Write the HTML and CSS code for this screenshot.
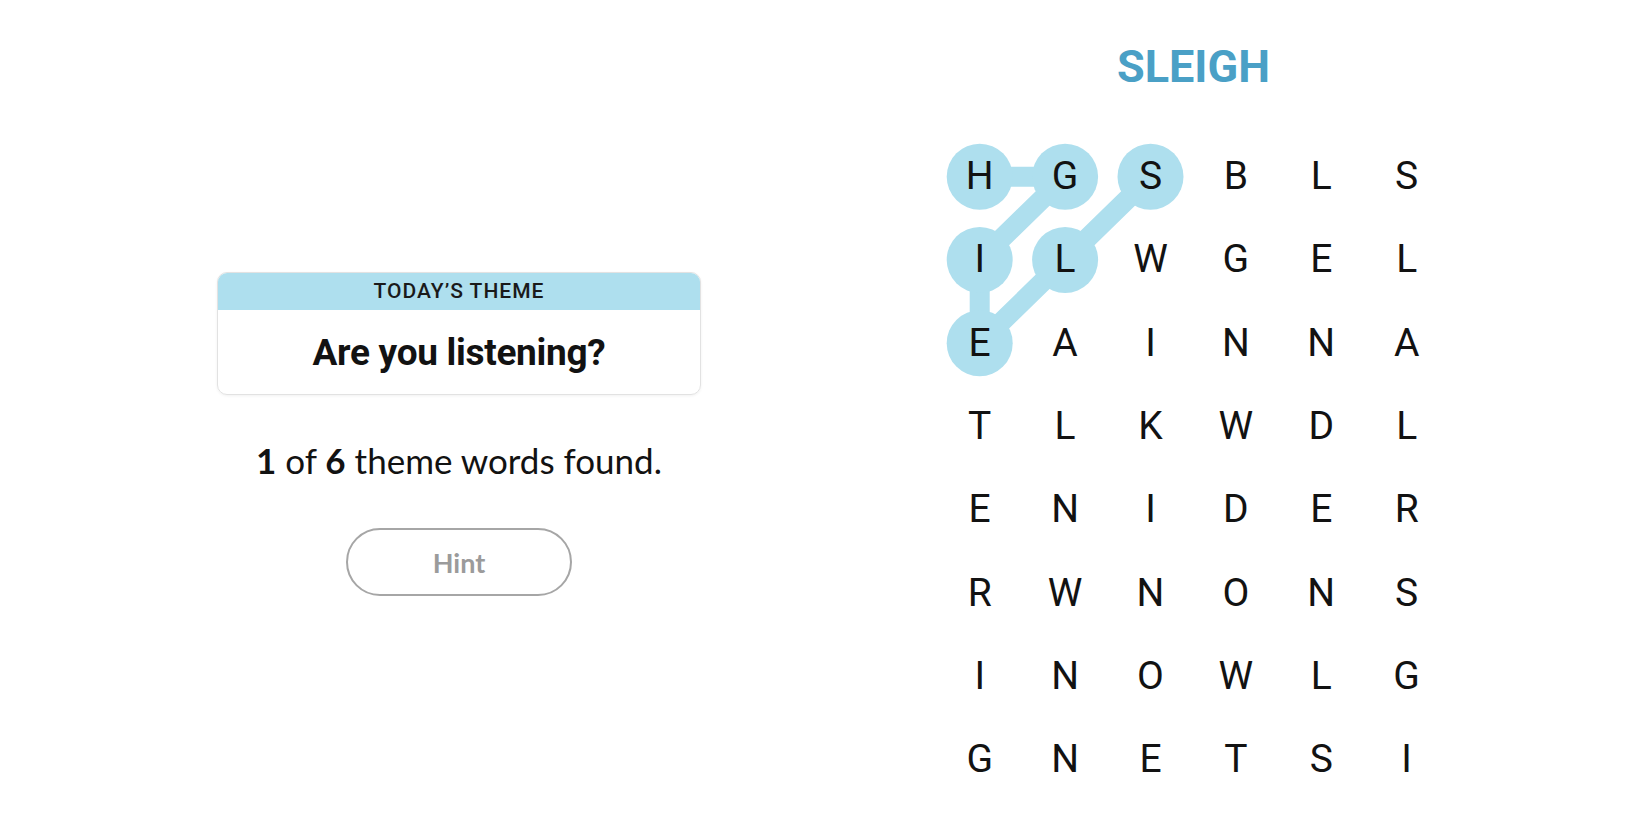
FILE: index.html
```html
<!DOCTYPE html>
<html lang="en">
<head>
<meta charset="utf-8">
<title>Strands</title>
<link rel="stylesheet" href="styles.css">
</head>
<body>
<main class="page">
  <section class="left">
    <div class="theme-card">
      <div class="theme-head">TODAY’S THEME</div>
      <div class="theme-body">Are you listening?</div>
    </div>
    <p class="progress"><b>1</b> of <b>6</b> theme words found.</p>
    <button class="hint">Hint</button>
  </section>
  <section class="right">
    <h1 class="found-word">SLEIGH</h1>
    <div class="board">
      <svg class="trail" width="513" height="667" viewBox="0 0 513 667" aria-hidden="true">
        <path d="M213.5 41.65 L128.1 124.95 L42.7 208.25 L42.7 124.95 L128.1 41.65 L42.7 41.65" fill="none" stroke="#aedfee" stroke-width="20" stroke-linejoin="round" stroke-linecap="round"/>
        <circle cx="42.7" cy="41.65" r="33" fill="#aedfee"/>
        <circle cx="128.1" cy="41.65" r="33" fill="#aedfee"/>
        <circle cx="213.5" cy="41.65" r="33" fill="#aedfee"/>
        <circle cx="42.7" cy="124.95" r="33" fill="#aedfee"/>
        <circle cx="128.1" cy="124.95" r="33" fill="#aedfee"/>
        <circle cx="42.7" cy="208.25" r="33" fill="#aedfee"/>
      </svg>
      <div class="grid">
        <span>H</span><span>G</span><span>S</span><span>B</span><span>L</span><span>S</span>
        <span>I</span><span>L</span><span>W</span><span>G</span><span>E</span><span>L</span>
        <span>E</span><span>A</span><span>I</span><span>N</span><span>N</span><span>A</span>
        <span>T</span><span>L</span><span>K</span><span>W</span><span>D</span><span>L</span>
        <span>E</span><span>N</span><span>I</span><span>D</span><span>E</span><span>R</span>
        <span>R</span><span>W</span><span>N</span><span>O</span><span>N</span><span>S</span>
        <span>I</span><span>N</span><span>O</span><span>W</span><span>L</span><span>G</span>
        <span>G</span><span>N</span><span>E</span><span>T</span><span>S</span><span>I</span>
      </div>
    </div>
  </section>
</main>
</body>
</html>
```

FILE: styles.css
```css
* { box-sizing: border-box; }
html, body {
  margin: 0;
  padding: 0;
  background: #ffffff;
  color: #121212;
}
body {
  font-family: Roboto, "Liberation Sans", Arial, sans-serif;
  width: 1650px;
  height: 825px;
  overflow: hidden;
}
.page {
  display: flex;
  align-items: flex-start;
}
.left {
  width: 918px;
  display: flex;
  flex-direction: column;
  align-items: center;
  padding-top: 272px;
}
.theme-card {
  width: 484px;
  height: 123px;
  border: 1px solid #e2e2e2;
  border-radius: 10px;
  overflow: hidden;
  box-shadow: 0 1px 3px rgba(0,0,0,0.06);
  display: flex;
  flex-direction: column;
}
.theme-head {
  height: 37px;
  line-height: 37px;
  background: #aedfee;
  text-align: center;
  font-size: 21px;
  font-weight: 500;
  letter-spacing: 1px;
  color: #1a1a1a;
}
.theme-body {
  flex: 1;
  display: flex;
  align-items: center;
  justify-content: center;
  font-size: 37px;
  font-weight: 700;
  letter-spacing: -0.3px;
  color: #121212;
}
.progress {
  margin: 45px 0 0;
  font-family: Lato, "Open Sans", sans-serif;
  font-size: 35px;
  line-height: 40px;
  color: #121212;
}
.progress b { font-weight: 700; }
.hint {
  margin-top: 48px;
  width: 226px;
  height: 68px;
  border: 2px solid #a6a6a6;
  border-radius: 34px;
  background: #fff;
  font-family: Lato, "Open Sans", sans-serif;
  font-size: 27px;
  font-weight: 700;
  color: #9b9b9b;
  padding: 0;
}
.right {
  padding-left: 19px;
  display: flex;
  flex-direction: column;
}
.found-word {
  margin: 41px 0 0;
  height: 52px;
  line-height: 52px;
  text-align: center;
  font-size: 45px;
  font-weight: 700;
  color: #4aa0c6;
  width: 513px;
}
.board {
  position: relative;
  margin-top: 42px;
  width: 513px;
  height: 667px;
}
.trail {
  position: absolute;
  left: 0;
  top: 0;
}
.grid {
  position: relative;
  display: grid;
  grid-template-columns: repeat(6, 85.4px);
  grid-template-rows: repeat(8, 83.3px);
}
.grid span {
  display: flex;
  align-items: center;
  justify-content: center;
  font-size: 39px;
  font-weight: 400;
  color: #121212;
  line-height: 1;
}
```
